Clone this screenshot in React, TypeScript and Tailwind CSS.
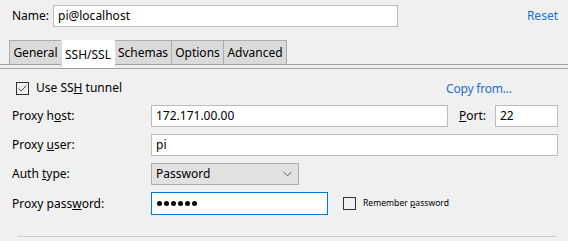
import React from "react";

const tabs = ["General", "SSH/SSL", "Schemas", "Options", "Advanced"];
const tabWidths: Record<string, string> = {
  General: "w-[53px]",
  "SSH/SSL": "w-[54px]",
  Schemas: "w-[58px]",
  Options: "w-[53px]",
  Advanced: "w-[64px]",
};

function Field({ value, className }: { value: string; className: string }) {
  return (
    <div
      className={`h-[22px] border border-[#bcbcbc] bg-white pl-[4px] flex items-center whitespace-nowrap ${className}`}
    >
      {value}
    </div>
  );
}

function Label({ children }: { children: React.ReactNode }) {
  return <span className="w-[139px] shrink-0 whitespace-nowrap">{children}</span>;
}

function CheckBox({ checked }: { checked?: boolean }) {
  return (
    <div className="w-[13px] h-[13px] border border-[#333] bg-transparent flex items-center justify-center shrink-0">
      {checked && (
        <svg width="11" height="11" viewBox="0 0 11 11">
          <path d="M1.5 5.5 L4 8 L9.5 2.5" fill="none" stroke="#4a4a4a" strokeWidth="1" />
        </svg>
      )}
    </div>
  );
}

export default function App() {
  return (
    <div
      className="w-[568px] h-[241px] bg-[#f0f0f0] text-[12px] leading-none text-black overflow-hidden"
      style={{ fontFamily: '"Noto Sans", "Open Sans", sans-serif' }}
    >
      {/* name row */}
      <div className="flex items-center h-[22px] mt-[5px] pl-[12px] pr-[10px]">
        <span className="w-[41px]">Name:</span>
        <Field value="pi@localhost" className="w-[345px]" />
        <span className="ml-auto text-[#1a6fd6]">Reset</span>
      </div>

      {/* tabs */}
      <div className="mt-[13px] h-[25px] border-b border-[#a0a0a0] flex items-start pl-[9px]">
        {tabs.map((t) => {
          const active = t === "SSH/SSL";
          return (
            <div
              key={t}
              className={`${tabWidths[t]} -ml-px first:ml-0 flex items-center justify-center border border-[#acacac] ${
                active
                  ? "h-[28px] bg-white border-b-0 border-white relative z-10 border-l-[#dadada]"
                  : "h-[24px] bg-[#dadada] border-b-0"
              }`}
            >
              {t}
            </div>
          );
        })}
      </div>
      <div className="h-[3px]" />

      {/* panel */}
      <div className="border-t border-[#a0a0a0]">
        <div className="flex items-center h-[22px] mt-[8px] pl-[16px]">
          <CheckBox checked />
          <span className="ml-[7px]">
            Use SS<u>H</u> tunnel
          </span>
          <span className="ml-[324px] mt-[2px] text-[#1a6fd6] tracking-[-0.2px]">Copy from...</span>
        </div>

        <div className="flex flex-col gap-[7px] mt-[6px] pl-[12px]">
          <div className="flex items-center">
            <Label>
              Proxy h<u>o</u>st:
            </Label>
            <Field value="172.171.00.00" className="w-[297px]" />
            <span className="ml-[11px] w-[36px]">
              <u>P</u>ort:
            </span>
            <Field value="22" className="w-[63px]" />
          </div>
          <div className="flex items-center">
            <Label>
              Proxy <u>u</u>ser:
            </Label>
            <Field value="pi" className="w-[407px]" />
          </div>
          <div className="flex items-center">
            <Label>
              Auth <u>t</u>ype:
            </Label>
            <div className="w-[148px] h-[22px] border border-[#adadad] bg-[#e1e1e1] pl-[4px] pr-[6px] flex items-center justify-between">
              <span>Password</span>
              <svg width="9" height="6" viewBox="0 0 9 6">
                <path d="M0.5 0.8 L4.5 4.8 L8.5 0.8" fill="none" stroke="#5a5a5a" strokeWidth="1" />
              </svg>
            </div>
          </div>
          <div className="flex items-center">
            <Label>
              Proxy pass<u>w</u>ord:
            </Label>
            <div className="w-[177px] h-[23px] border border-[#0078d7] bg-white pl-[5px] flex items-center gap-[2px]">
              {[0, 1, 2, 3, 4, 5].map((i) => (
                <span key={i} className="w-[5px] h-[5px] rounded-full bg-black" />
              ))}
            </div>
            <div className="ml-[15px]">
              <CheckBox />
            </div>
            <span className="ml-[7px] text-[8.6px]">
              Remember <u>p</u>assword
            </span>
          </div>
        </div>

        <div className="mt-[21px] ml-[18px] w-[538px] border-t border-[#cdcdcd]" />
      </div>
    </div>
  );
}
